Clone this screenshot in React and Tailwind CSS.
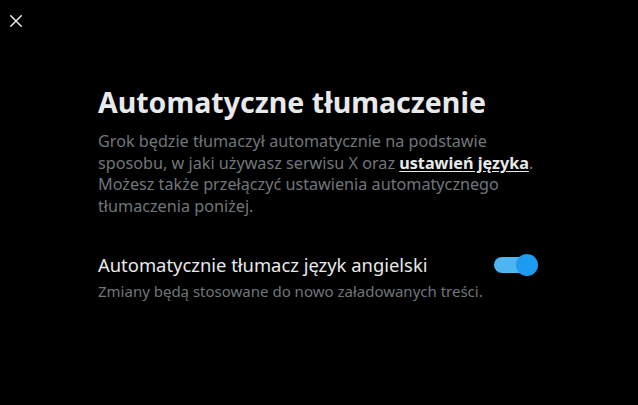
import React, { useState } from 'react'

const App = () => {
    const [enabled, setEnabled] = useState(true);

    return (
        <main className="relative w-full h-[405px] bg-black text-[#e7e9ea]" style={{ fontFamily: '"Noto Sans", "Open Sans", sans-serif' }}>
            {/* close button */}
            <button className="absolute left-[6px] top-[11px] w-[20px] h-[20px] flex items-center justify-center text-[#e7e9ea]">
                <svg viewBox="0 0 24 24" className="w-[18px] h-[18px]" fill="none" stroke="currentColor" strokeWidth="2" strokeLinecap="round">
                    <path d="M5 5l14 14M19 5L5 19" />
                </svg>
            </button>

            <div className="w-[442px] mx-auto pt-[84px]">
                <h1 className="text-[28.5px] leading-[36px] font-bold text-[#e7e9ea]">Automatyczne tłumaczenie</h1>
                <p className="mt-[11px] text-[16.2px] leading-[21.7px] text-[#71767b]">
                    Grok będzie tłumaczył automatycznie na podstawie sposobu, w jaki używasz serwisu X oraz{' '}
                    <a href="#" className="font-bold text-[#e7e9ea] underline underline-offset-2">ustawień języka</a>. Możesz także przełączyć ustawienia automatycznego tłumaczenia poniżej.
                </p>

                <div className="mt-[34px] flex items-center justify-between">
                    <span className="text-[18.4px] leading-[26px] text-[#e7e9ea]">Automatycznie tłumacz język angielski</span>
                    <button onClick={() => setEnabled(!enabled)} className="relative w-[44px] h-[24px] mr-[2px] flex items-center">
                        <span className={`absolute left-0 right-[4px] h-[16px] rounded-full ${enabled ? 'bg-[#4fb4f2]' : 'bg-[#333639]'}`}></span>
                        <span className={`absolute w-[22px] h-[22px] rounded-full ${enabled ? 'right-0 bg-[#1d9bf0]' : 'left-0 bg-[#e7e9ea]'}`}></span>
                    </button>
                </div>
                <p className="mt-[3px] text-[15px] leading-[20px] text-[#71767b]">Zmiany będą stosowane do nowo załadowanych treści.</p>
            </div>
        </main>
    )
}

export default App
